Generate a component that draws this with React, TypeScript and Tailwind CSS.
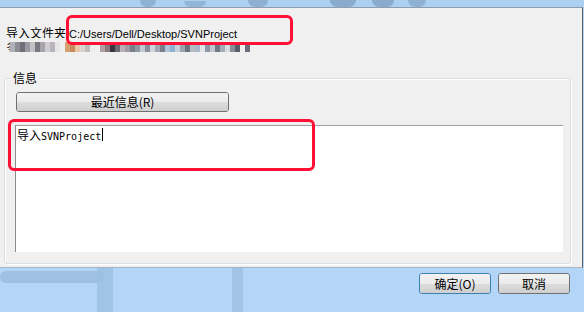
import React from "react";

const cjk = { fontFamily: '"Noto Sans CJK SC", "Liberation Sans", sans-serif' };
const latin = { fontFamily: '"Liberation Sans", "Noto Sans CJK SC", sans-serif' };
const mono = { fontFamily: '"DejaVu Sans Mono", "Liberation Mono", monospace' };

// blurred-out second line (pixel mosaic)
const mosaic = [
  "#b0b0b8", "#8c8c94", "#6e6e78", "#9a98a0", "#c4c0c4", "#7a7880", "#a8a4ac", "#d0ccd0",
  "#b8b4bc", "#e8e6e8", "#f0f0f0", "#d4a070", "#c88a5c", "#e8c8a8", "#d8d4d0", "#c0bcbc",
  "#eeeeee", "#f0f0f0", "#b0a0a0", "#8a7a7e", "#3a3440", "#6e6a74", "#b8b0b4", "#a09aa4",
  "#7a8088", "#9098a4", "#c0c8d0", "#8890a0", "#d0d4d8", "#a0a8b4", "#78808c", "#b0c4d8",
  "#90b0d0", "#c8d0d8", "#9aa4b0", "#6c7480", "#b4bcc4", "#a8b8c8", "#e0e4e8", "#8c96a4",
  "#c0c4cc", "#707884", "#a4acb8", "#d8dce0", "#8a8e98", "#5a5e68", "#f0f0f0", "#6a6e78",
];

function WinButton({
  children,
  isDefault,
  className,
}: {
  children: React.ReactNode;
  isDefault?: boolean;
  className?: string;
}) {
  return (
    <div
      className={`relative flex items-center justify-center rounded-[3px] border text-[12px] leading-[14px] text-black overflow-hidden ${
        isDefault ? "border-[#3c7fb1]" : "border-[#707070]"
      } ${className ?? ""}`}
      style={cjk}
    >
      <div className="absolute inset-0 flex flex-col">
        <div className="flex-1 bg-gradient-to-b from-[#f2f2f2] to-[#ebebeb]" />
        <div className="flex-1 bg-gradient-to-b from-[#dddddd] to-[#cfcfcf]" />
      </div>
      <span className="relative">{children}</span>
    </div>
  );
}

export default function App() {
  return (
    <div className="w-[584px] h-[312px] bg-[#b3d6f8] overflow-hidden flex flex-col relative">
      {/* desktop strip above the dialog */}
      <div className="h-[7px] shrink-0 bg-[#acd0f2] flex items-center">
        <div className="w-[140px]" />
        <div className="w-[16px] h-[7px] rounded-b-full bg-[#8fb2d4]" />
        <div className="w-[28px]" />
        <div className="w-[22px] h-[6px] rounded-b-full bg-[#94b6d6]" />
        <div className="w-[42px]" />
        <div className="w-[20px] h-[7px] rounded-b-full bg-[#8fb0d0]" />
        <div className="w-[62px]" />
        <div className="w-[26px] h-[7px] rounded-b-full bg-[#8aaccc]" />
        <div className="w-[16px]" />
        <div className="w-[22px] h-[7px] rounded-b-full bg-[#8aaccc]" />
        <div className="w-[14px]" />
        <div className="w-[18px] h-[7px] rounded-b-full bg-[#90b2d2]" />
      </div>

      {/* dialog body */}
      <div className="w-[583px] h-[261px] shrink-0 bg-[#f0f0f0] border-t border-[#8f9eac] border-r border-r-[#5c5c5c] border-b border-b-[#a7b3bd] flex flex-col">
        <div className="h-[16px] shrink-0 mt-[18px] ml-[6px] flex items-start">
          <span className="h-[12px] overflow-hidden text-[12px] leading-[14px] text-black" style={cjk}>
            导入文件夹
          </span>
          <span className="ml-[3px] mt-[1px] text-[11px] leading-[14px] text-black" style={latin}>
            C:/Users/Dell/Desktop/SVNProject
          </span>
        </div>
        <div className="h-[10px] shrink-0 flex items-start">
          <span className="ml-[6px] w-[4px] overflow-hidden text-[12px] leading-[10px] text-black" style={cjk}>
            多
          </span>
          <div className="flex h-[10px]">
            {mosaic.map((c, i) => (
              <div key={i} className="w-[5px] h-[10px]" style={{ backgroundColor: c }} />
            ))}
          </div>
        </div>

        {/* group box 信息 */}
        <div className="mt-[26px] ml-[4px] w-[567px] h-[186px] shrink-0 rounded-[3px] border border-[#d5dfe5] shadow-[inset_1px_1px_0_#ffffff,1px_1px_0_#ffffff] flex flex-col">
          <span
            className="-mt-[8px] ml-[6px] px-[2px] w-fit bg-[#f0f0f0] text-[12px] leading-[14px] text-black"
            style={cjk}
          >
            信息
          </span>
          <WinButton className="mt-[7px] ml-[11px] w-[213px] h-[20px] shrink-0">最近信息(R)</WinButton>
          <div className="mt-[13px] ml-[10px] w-[548px] h-[127px] shrink-0 bg-white border-t border-l border-t-[#a0a0a0] border-l-[#8c8c8c] pl-[1px] pt-[2px] flex items-baseline">
            <span className="text-[12px] leading-[13px] text-black" style={cjk}>
              导入
            </span>
            <span className="text-[10px] leading-[13px] text-black" style={mono}>
              SVNProject
            </span>
            <span className="ml-[1px] w-[1px] h-[13px] bg-black self-start" />
          </div>
        </div>
      </div>

      {/* footer with wallpaper behind */}
      <div className="relative flex-1">
        <svg className="absolute inset-0" width="584" height="44" viewBox="0 0 584 44">
          <rect x="0" y="3" width="104" height="12" rx="6" fill="#95b7d9" opacity="0.7" />
          <rect x="97" y="0" width="16" height="44" fill="#9bbfe0" opacity="0.8" />
          <rect x="232" y="0" width="11" height="44" fill="#9dc0e2" opacity="0.8" />
        </svg>
        <div className="relative flex justify-end gap-[7px] pt-[5px] pr-[14px]">
          <WinButton isDefault className="w-[72px] h-[21px]">
            确定(O)
          </WinButton>
          <WinButton className="w-[72px] h-[21px]">取消</WinButton>
        </div>
      </div>

      {/* red highlight marks */}
      <div className="absolute left-[66px] top-[15px] w-[227px] h-[30px] rounded-[6px] border-[3px] border-[#ff1034]" />
      <div className="absolute left-[8px] top-[119px] w-[307px] h-[52px] rounded-[6px] border-[3px] border-[#ff1034]" />
    </div>
  );
}
